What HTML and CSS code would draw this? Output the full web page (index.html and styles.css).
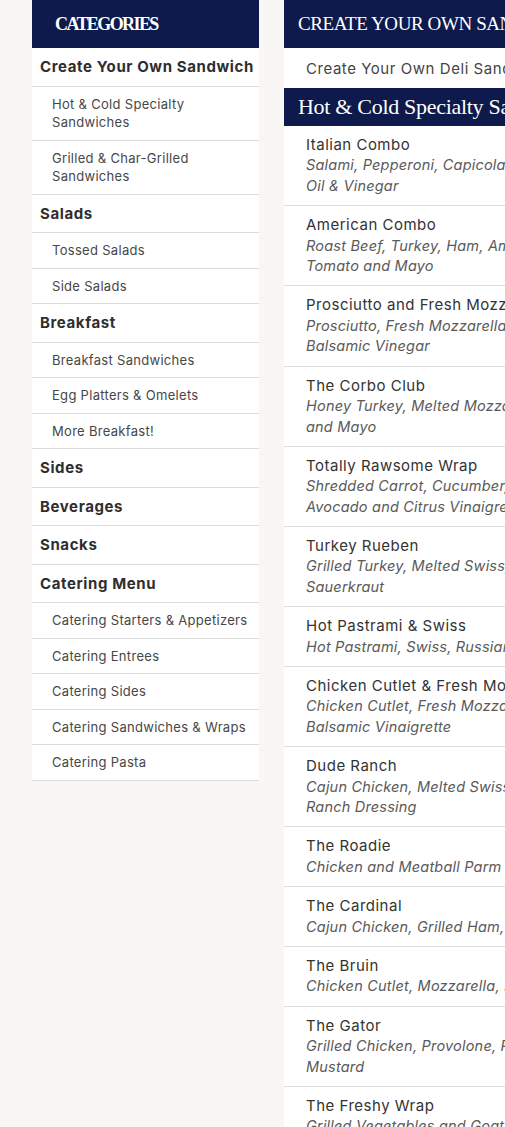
FILE: index.html
```html
<!DOCTYPE html>
<html>
<head>
<meta charset="utf-8">
<link rel="stylesheet" href="styles.css">
</head>
<body>
<div class="page">
  <aside class="sidebar">
    <div class="side-head">CATEGORIES</div>
    <ul class="cats">
      <li class="cat">Create Your Own Sandwich</li>
      <li class="sub">Hot &amp; Cold Specialty Sandwiches</li>
      <li class="sub">Grilled &amp; Char-Grilled Sandwiches</li>
      <li class="cat">Salads</li>
      <li class="sub">Tossed Salads</li>
      <li class="sub">Side Salads</li>
      <li class="cat">Breakfast</li>
      <li class="sub">Breakfast Sandwiches</li>
      <li class="sub">Egg Platters &amp; Omelets</li>
      <li class="sub">More Breakfast!</li>
      <li class="cat">Sides</li>
      <li class="cat">Beverages</li>
      <li class="cat">Snacks</li>
      <li class="cat">Catering Menu</li>
      <li class="sub">Catering Starters &amp; Appetizers</li>
      <li class="sub">Catering Entrees</li>
      <li class="sub">Catering Sides</li>
      <li class="sub">Catering Sandwiches &amp; Wraps</li>
      <li class="sub">Catering Pasta</li>
    </ul>
  </aside>
  <main class="menu">
    <div class="menu-head">CREATE YOUR OWN SANDWICH</div>
    <div class="menu-intro">Create Your Own Deli Sandwich</div>
    <div class="section-head">Hot &amp; Cold Specialty Sandwiches</div>
    <ul class="items">
      <li class="item"><div class="name">Italian Combo</div><div class="desc">Salami, Pepperoni, Capicola, Provolone, Lettuce, Tomato, Onion,<br>Oil &amp; Vinegar</div></li>
      <li class="item"><div class="name">American Combo</div><div class="desc">Roast Beef, Turkey, Ham, American, Lettuce, Onion,<br>Tomato and Mayo</div></li>
      <li class="item"><div class="name">Prosciutto and Fresh Mozzarella</div><div class="desc">Prosciutto, Fresh Mozzarella, Roasted Peppers, Arugula,<br>Balsamic Vinegar</div></li>
      <li class="item"><div class="name">The Corbo Club</div><div class="desc">Honey Turkey, Melted Mozzarella, Bacon, Lettuce, Tomato<br>and Mayo</div></li>
      <li class="item"><div class="name">Totally Rawsome Wrap</div><div class="desc">Shredded Carrot, Cucumber, Sprouts, Lettuce, Tomato,<br>Avocado and Citrus Vinaigrette</div></li>
      <li class="item"><div class="name">Turkey Rueben</div><div class="desc">Grilled Turkey, Melted Swiss, Russian Dressing and<br>Sauerkraut</div></li>
      <li class="item"><div class="name">Hot Pastrami &amp; Swiss</div><div class="desc">Hot Pastrami, Swiss, Russian Dressing</div></li>
      <li class="item"><div class="name">Chicken Cutlet &amp; Fresh Mozzarella</div><div class="desc">Chicken Cutlet, Fresh Mozzarella, Roasted Peppers and<br>Balsamic Vinaigrette</div></li>
      <li class="item"><div class="name">Dude Ranch</div><div class="desc">Cajun Chicken, Melted Swiss, Bacon, Lettuce, Tomato and<br>Ranch Dressing</div></li>
      <li class="item"><div class="name">The Roadie</div><div class="desc">Chicken and Meatball Parm</div></li>
      <li class="item"><div class="name">The Cardinal</div><div class="desc">Cajun Chicken, Grilled Ham, Swiss and Honey Mustard</div></li>
      <li class="item"><div class="name">The Bruin</div><div class="desc">Chicken Cutlet, Mozzarella, Bacon and Ranch</div></li>
      <li class="item"><div class="name">The Gator</div><div class="desc">Grilled Chicken, Provolone, Roasted Peppers and Honey<br>Mustard</div></li>
      <li class="item"><div class="name">The Freshy Wrap</div><div class="desc">Grilled Vegetables and Goat Cheese</div></li>
    </ul>
  </main>
</div>
</body>
</html>
```

FILE: styles.css
```css
html, body {
  margin: 0;
  padding: 0;
}
body {
  background: #f8f7f5;
  font-family: "Inter", "DejaVu Sans", sans-serif;
  color: #333;
  overflow: hidden;
}
.page {
  display: flex;
  align-items: flex-start;
  gap: 25px;
  padding-left: 32px;
  width: 505px;
  box-sizing: border-box;
  overflow: hidden;
  height: 1127px;
}
.sidebar {
  width: 227px;
  flex-shrink: 0;
}
.side-head {
  background: #0d1a4b;
  color: #fff;
  height: 48px;
  display: flex;
  align-items: center;
  padding-left: 23px;
  font-family: "Liberation Serif", serif;
  font-weight: bold;
  font-size: 18px;
  letter-spacing: -1.6px;
}
.cats {
  list-style: none;
  margin: 0;
  padding: 0;
  background: #fff;
}
.cats li {
  border-bottom: 1px solid #dcdcdc;
}
.cat {
  font-weight: 700;
  font-size: 15px;
  line-height: 19.5px;
  padding: 9px 0 9px 8px;
  color: #2e2e2e;
  letter-spacing: 0.6px;
}
.sub {
  font-size: 13px;
  line-height: 18.5px;
  padding: 8px 8px 8px 20px;
  color: #474747;
  letter-spacing: 0.3px;
}
.menu {
  width: 560px;
  flex-shrink: 0;
}
.menu-head {
  background: #0d1a4b;
  color: #fff;
  height: 48px;
  display: flex;
  align-items: center;
  padding-left: 14px;
  font-family: "Liberation Serif", serif;
  font-size: 19px;
  letter-spacing: -0.4px;
  white-space: nowrap;
}
.menu-intro {
  background: #fff;
  height: 40px;
  display: flex;
  align-items: center;
  padding-left: 22px;
  font-size: 15px;
  color: #444;
  letter-spacing: 0.55px;
  white-space: nowrap;
}
.section-head {
  background: #0d1a4b;
  color: #fff;
  height: 38px;
  display: flex;
  align-items: center;
  padding-left: 14px;
  font-family: "Liberation Serif", serif;
  font-size: 22px;
  letter-spacing: -0.3px;
  white-space: nowrap;
}
.items {
  list-style: none;
  margin: 0;
  padding: 0;
  background: #fff;
}
.item {
  padding: 9px 0 8.85px 22px;
  border-bottom: 1px solid #dcdcdc;
  white-space: nowrap;
}
.name {
  font-size: 15px;
  line-height: 20.45px;
  color: #333;
  letter-spacing: 0.5px;
}
.desc {
  font-size: 14.5px;
  line-height: 20.45px;
  font-style: italic;
  color: #5a5a5a;
  letter-spacing: 0.2px;
}
```
